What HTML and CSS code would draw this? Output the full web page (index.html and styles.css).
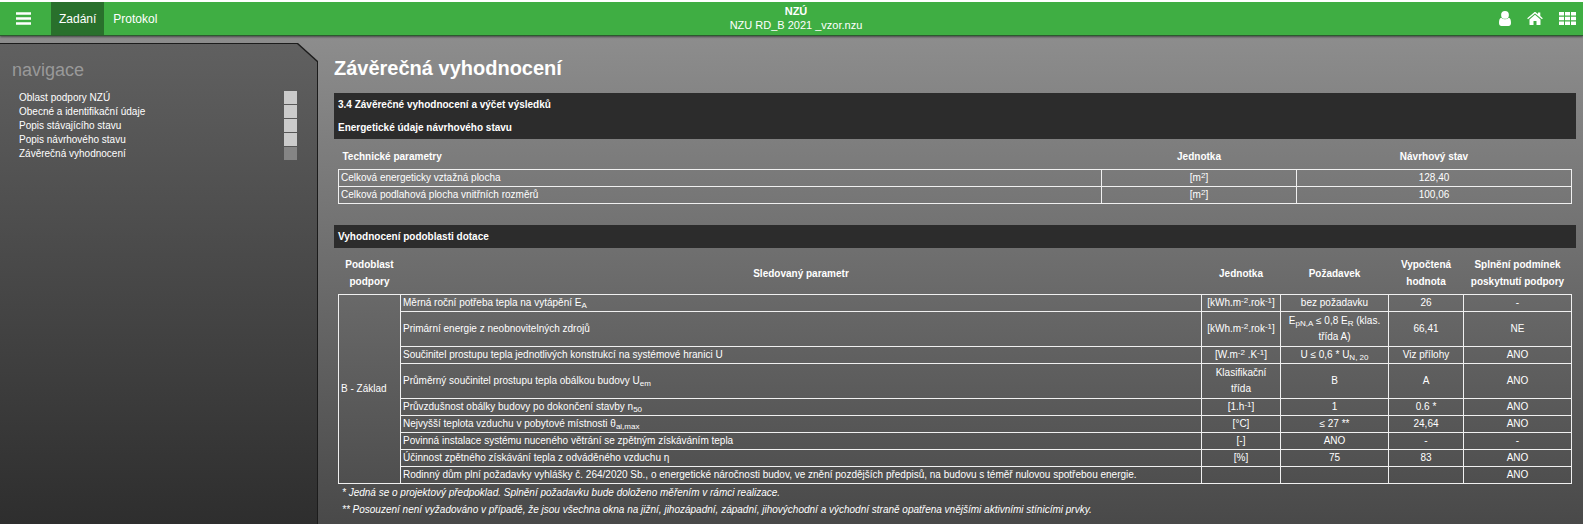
FILE: index.html
```html
<!DOCTYPE html>
<html lang="cs">

<head>
    <meta charset="UTF-8">
    <meta name="viewport" content="width=device-width, initial-scale=1.0">
    <title>NZÚ - Závěrečná vyhodnocení</title>
    <link rel="stylesheet" href="styles.css">
</head>

<body>
    <header class="topbar">
        <div class="topbar-left">
            <button type="button" class="icon-button menu-button" aria-label="Menu">
                <svg width="15" height="13" viewBox="0 0 15 13" fill="currentColor">
                    <path d="M0 .2h15v2.600H0zM0 5.200h15v2.600H0zM0 10.200h15v2.600H0z" />
                </svg>
            </button>
            <nav class="tabs">
                <a href="#" class="tab active">Zadání</a>
                <a href="#" class="tab">Protokol</a>
            </nav>
        </div>
        <div class="file-title">
            <strong>NZÚ</strong>
            <span>NZU RD_B 2021 _vzor.nzu</span>
        </div>
        <div class="topbar-right">
            <button type="button" class="icon-button" aria-label="Uživatel">
                <svg width="12" height="15" viewBox="0 0 12 15" fill="currentColor">
                    <circle cx="6" cy="3.900" r="3.900" />
                    <path d="M2.300 6.700C.7 7 0 8.900 0 12c0 2 1 3 2.500 3h7c1.500 0 2.500-1 2.500-3 0-3.100-.7-5-2.300-5.300a5 5 0 0 1-7.400 0z" />
                </svg>
            </button>
            <button type="button" class="icon-button" aria-label="Domů">
                <svg width="16" height="13" viewBox="0 0 16 13" fill="currentColor">
                    <path d="M8 2.800l5.500 4.600V12.400c0 .4-.2.600-.6.600H9.500V9h-3v4H3.100c-.4 0-.6-.2-.6-.6V7.400z" />
                    <path d="M8 0c.4 0 .7.100 1 .4l2 1.700V.6h2.300v3.500l2.500 2.100-.8 1.100L8 1.600 1 7.300.2 6.200 7 .4C7.300.1 7.600 0 8 0z" />
                </svg>
            </button>
            <button type="button" class="icon-button" aria-label="Aplikace">
                <svg width="17" height="13" viewBox="0 0 17 13" fill="currentColor">
                    <path d="M0 0h5v3.500H0zM6 0h5v3.500H6zM12 0h5v3.500h-5zM0 4.700h5v3.600H0zM6 4.700h5v3.600H6zM12 4.700h5v3.600h-5zM0 9.500h5V13H0zM6 9.500h5V13H6zM12 9.500h5V13h-5z" />
                </svg>
            </button>
        </div>
    </header>

    <div class="layout">
        <aside class="sidebar">
            <div class="sidebar-inner">
                <h2>navigace</h2>
                <ul class="nav-list">
                    <li><a href="#">Oblast podpory NZÚ <span class="state"></span></a></li>
                    <li><a href="#">Obecné a identifikační údaje <span class="state"></span></a></li>
                    <li><a href="#">Popis stávajícího stavu <span class="state"></span></a></li>
                    <li><a href="#">Popis návrhového stavu <span class="state"></span></a></li>
                    <li><a href="#">Závěrečná vyhodnocení <span class="state current"></span></a></li>
                </ul>
            </div>
        </aside>

        <main class="content">
            <h1>Závěrečná vyhodnocení</h1>

            <section class="block">
                <h3>3.4 Závěrečné vyhodnocení a výčet výsledků</h3>
                <h3>Energetické údaje návrhového stavu</h3>
                <table class="parameters">
                    <colgroup>
                        <col>
                        <col class="col-unit">
                        <col class="col-state">
                    </colgroup>
                    <thead>
                        <tr>
                            <th class="left">Technické parametry</th>
                            <th>Jednotka</th>
                            <th>Návrhový stav</th>
                        </tr>
                    </thead>
                    <tbody>
                        <tr>
                            <td class="left">Celková energeticky vztažná plocha</td>
                            <td>[m<sup>2</sup>]</td>
                            <td>128,40</td>
                        </tr>
                        <tr>
                            <td class="left">Celková podlahová plocha vnitřních rozměrů</td>
                            <td>[m<sup>2</sup>]</td>
                            <td>100,06</td>
                        </tr>
                    </tbody>
                </table>
            </section>

            <section class="block">
                <h3>Vyhodnocení podoblasti dotace</h3>
                <table class="evaluation">
                    <colgroup>
                        <col class="col-area">
                        <col>
                        <col class="col-measure">
                        <col class="col-required">
                        <col class="col-value">
                        <col class="col-result">
                    </colgroup>
                    <thead>
                        <tr>
                            <th>Podoblast podpory</th>
                            <th>Sledovaný parametr</th>
                            <th>Jednotka</th>
                            <th>Požadavek</th>
                            <th>Vypočtená hodnota</th>
                            <th>Splnění podmínek poskytnutí podpory</th>
                        </tr>
                    </thead>
                    <tbody>
                        <tr>
                            <td class="left" rowspan="9">B - Základ</td>
                            <td class="left">Měrná roční potřeba tepla na vytápění E<sub>A</sub></td>
                            <td class="unit">[kWh.m<sup>-2</sup>.rok<sup>-1</sup>]</td>
                            <td>bez požadavku</td>
                            <td>26</td>
                            <td>-</td>
                        </tr>
                        <tr class="tall">
                            <td class="left">Primární energie z neobnovitelných zdrojů</td>
                            <td class="unit">[kWh.m<sup>-2</sup>.rok<sup>-1</sup>]</td>
                            <td>E<sub>pN,A</sub> ≤ 0,8 E<sub>R</sub> (klas.<br>třída A)</td>
                            <td>66,41</td>
                            <td>NE</td>
                        </tr>
                        <tr>
                            <td class="left">Součinitel prostupu tepla jednotlivých konstrukcí na systémové hranici U</td>
                            <td class="unit">[W.m<sup>-2</sup> .K<sup>-1</sup>]</td>
                            <td>U ≤ 0,6 * U<sub>N, 20</sub></td>
                            <td>Viz přílohy</td>
                            <td>ANO</td>
                        </tr>
                        <tr class="tall">
                            <td class="left">Průměrný součinitel prostupu tepla obálkou budovy U<sub>em</sub></td>
                            <td>Klasifikační<br>třída</td>
                            <td>B</td>
                            <td>A</td>
                            <td>ANO</td>
                        </tr>
                        <tr>
                            <td class="left">Průvzdušnost obálky budovy po dokončení stavby n<sub>50</sub></td>
                            <td class="unit">[1.h<sup>-1</sup>]</td>
                            <td>1</td>
                            <td>0.6 *</td>
                            <td>ANO</td>
                        </tr>
                        <tr>
                            <td class="left">Nejvyšší teplota vzduchu v pobytové místnosti θ<sub>ai,max</sub></td>
                            <td>[°C]</td>
                            <td>≤ 27 **</td>
                            <td>24,64</td>
                            <td>ANO</td>
                        </tr>
                        <tr>
                            <td class="left">Povinná instalace systému nuceného větrání se zpětným získáváním tepla</td>
                            <td>[-]</td>
                            <td>ANO</td>
                            <td>-</td>
                            <td>-</td>
                        </tr>
                        <tr>
                            <td class="left">Účinnost zpětného získávání tepla z odváděného vzduchu η</td>
                            <td>[%]</td>
                            <td>75</td>
                            <td>83</td>
                            <td>ANO</td>
                        </tr>
                        <tr>
                            <td class="left">Rodinný dům plní požadavky vyhlášky č. 264/2020 Sb., o energetické náročnosti budov, ve znění pozdějších předpisů, na budovu s téměř nulovou spotřebou energie.</td>
                            <td></td>
                            <td></td>
                            <td></td>
                            <td>ANO</td>
                        </tr>
                    </tbody>
                </table>
                <div class="notes">
                    <p>* Jedná se o projektový předpoklad. Splnění požadavku bude doloženo měřením v rámci realizace.</p>
                    <p>** Posouzení není vyžadováno v případě, že jsou všechna okna na jižní, jihozápadní, západní, jihovýchodní a východní straně opatřena vnějšími aktivními stínicími prvky.</p>
                </div>
            </section>
        </main>
    </div>
</body>

</html>
```

FILE: styles.css
```css
* {
    box-sizing: border-box;
}

body {
    margin: 0;
    min-height: 100vh;
    display: flex;
    flex-direction: column;
    font-family: "Liberation Sans", Arial, sans-serif;
    font-size: 10px;
    color: #fff;
    background: linear-gradient(#929292, #494949);
}

a {
    color: inherit;
    text-decoration: none;
}

/* top bar */
.topbar {
    display: grid;
    grid-template-columns: 1fr auto 1fr;
    height: 36px;
    padding: 0 7px 0 16px;
    border-top: 2px solid #fff;
    background: #3fae43;
    border-bottom: 1px solid #2c5a2e;
    box-shadow: 0 1px 2px rgba(0, 0, 0, 0.5);
}

.topbar-left,
.topbar-right,
.tabs {
    display: flex;
}

.topbar-right {
    justify-content: flex-end;
    align-items: center;
    gap: 16px;
}

.icon-button {
    display: flex;
    align-items: center;
    justify-content: center;
    padding: 0;
    border: none;
    background: none;
    color: #fff;
    cursor: pointer;
}

.menu-button {
    margin-right: 20px;
}

.tabs {
    gap: 1px;
}

.tab {
    display: flex;
    align-items: center;
    padding: 0 8px;
    font-size: 12px;
}

.tab.active {
    background: #29702c;
}

.file-title {
    display: flex;
    flex-direction: column;
    align-items: center;
    font-size: 11px;
    line-height: 14px;
    padding-top: 2px;
}

/* page */
.layout {
    flex: 1;
    display: flex;
}

.sidebar {
    width: 318px;
    flex-shrink: 0;
    margin-top: 7px;
    padding: 1px 1px 0 0;
    background: #1c1c1c;
    clip-path: polygon(0 0, 298px 0, 100% 18px, 100% 100%, 0 100%);
}

.sidebar-inner {
    height: 100%;
    padding: 16px 20px 16px 12px;
    background: linear-gradient(#606060, #2e2e2e);
    clip-path: polygon(0 0, 297px 0, 100% 18px, 100% 100%, 0 100%);
}

.sidebar h2 {
    margin: 0 0 10px;
    font-size: 18px;
    font-weight: normal;
    line-height: 20px;
    color: #999;
}

.nav-list {
    margin: 0;
    padding: 0 0 0 7px;
    list-style: none;
}

.nav-list a {
    display: flex;
    justify-content: space-between;
    align-items: center;
    height: 14px;
}

.state {
    width: 13px;
    height: 13px;
    background: #cbcbcb;
}

.state.current {
    background: #858585;
}

.content {
    flex: 1;
    padding: 20px 7px 0 16px;
}

h1 {
    margin: 0 0 12px;
    font-size: 20px;
    line-height: 25px;
}

.block {
    margin-bottom: 21px;
}

.block:last-child {
    margin-bottom: 0;
}

h3 {
    margin: 0;
    padding: 0 4px;
    font-size: 10px;
    line-height: 23px;
    background: #2c2c2c;
}

/* tables */
table {
    width: calc(100% - 8px);
    margin: 8px 4px 0;
    table-layout: fixed;
    border-collapse: collapse;
    line-height: 16px;
    text-align: center;
}

.parameters {
    margin-top: 9px;
}

th {
    padding: 0 4px 4px;
    line-height: 17px;
}

td {
    height: 17px;
    padding: 0 2px;
    border: 1px solid #f0f0f0;
}

.tall td {
    height: 35px;
}

.left {
    text-align: left;
}

.unit {
    white-space: nowrap;
}

sub,
sup {
    font-size: 8px;
    line-height: 0;
}

sup {
    vertical-align: 3px;
}

sub {
    vertical-align: -2px;
}

.col-unit {
    width: 195px;
}

.col-state {
    width: 275px;
}

.col-area {
    width: 62px;
}

.col-measure {
    width: 79px;
}

.col-required {
    width: 108px;
}

.col-value {
    width: 75px;
}

.col-result {
    width: 108px;
}

.notes {
    padding: 0 8px;
    font-style: italic;
    line-height: 17px;
}

.notes p {
    margin: 0;
}
```
